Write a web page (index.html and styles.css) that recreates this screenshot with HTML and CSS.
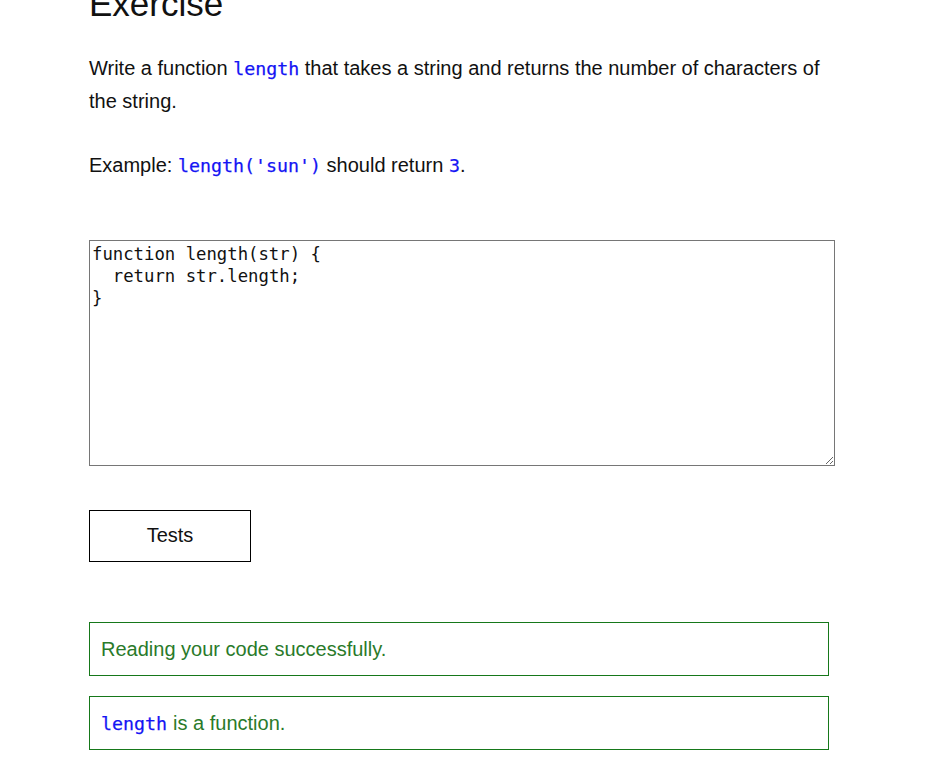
FILE: index.html
```html
<!DOCTYPE html>
<html>
<head>
<meta charset="utf-8">
<link rel="stylesheet" href="styles.css">
</head>
<body>
<main class="page">
  <h1 class="title">Exercise</h1>
  <p class="text">Write a function <code class="code">length</code> that takes a string and returns the number of characters of the string.</p>
  <p class="text">Example: <code class="code">length('sun')</code> should return <code class="code">3</code>.</p>
  <textarea class="editor" spellcheck="false">function length(str) {
  return str.length;
}</textarea>
  <button class="btn">Tests</button>
  <div class="msgs">
    <div class="msg">Reading your code successfully.</div>
    <div class="msg"><code class="code">length</code> is a function.</div>
  </div>
</main>
</body>
</html>
```

FILE: styles.css
```css
html, body {
  margin: 0;
  padding: 0;
  background: #fff;
}
body {
  font-family: "Liberation Sans", Arial, sans-serif;
  color: #111;
  font-size: 20px;
}
.page {
  width: 740px;
  margin-left: 89px;
  display: flex;
  flex-direction: column;
  align-items: flex-start;
}
.title {
  font-size: 35px;
  font-weight: normal;
  line-height: 38px;
  margin: -15px 0 0 0;
}
.text {
  margin: 29px 0 0 0;
  line-height: 33px;
  width: 735px;
}
.code {
  font-family: "DejaVu Sans Mono", monospace;
  font-size: 18.3px;
  color: #1414f4;
  -webkit-text-stroke: 0.25px #1414f4;
}
.text + .text {
  margin-top: 31px;
}
.editor {
  margin-top: 58px;
  box-sizing: border-box;
  width: 746px;
  height: 226px;
  border: 1px solid #767676;
  padding: 2px 2px;
  font-family: "DejaVu Sans Mono", monospace;
  font-size: 17.3px;
  line-height: 22px;
  color: #111;
  resize: both;
}
.btn {
  margin-top: 44px;
  box-sizing: border-box;
  width: 162px;
  height: 52px;
  background: #fff;
  border: 1px solid #000;
  font-family: "Liberation Sans", Arial, sans-serif;
  font-size: 20px;
  color: #111;
  padding: 0 0 2px 0;
}
.msgs {
  margin-top: 60px;
  display: flex;
  flex-direction: column;
  gap: 20px;
  width: 740px;
}
.msg {
  box-sizing: border-box;
  height: 54px;
  border: 1px solid #16781a;
  color: #2a7a2a;
  padding: 0 11px;
  display: flex;
  align-items: center;
}
.msg .code {
  margin-right: 6px;
}
```
